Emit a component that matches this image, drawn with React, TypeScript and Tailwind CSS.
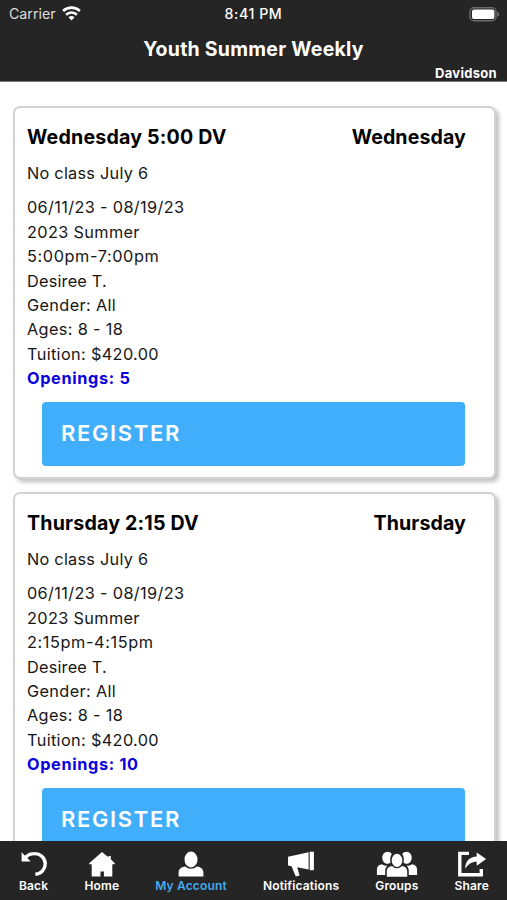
import type { ReactNode } from 'react'

const details = ['06/11/23 - 08/19/23', '2023 Summer']

const classes = [
  { title: 'Wednesday 5:00 DV', day: 'Wednesday', time: '5:00pm-7:00pm', openings: 5 },
  { title: 'Thursday 2:15 DV', day: 'Thursday', time: '2:15pm-4:15pm', openings: 10 },
]

const tabs: { label: string; active?: boolean; icon: ReactNode }[] = [
  {
    label: 'Back',
    icon: (
      <svg className="h-[26px] w-[26px]" viewBox="0 0 26 26" fill="none">
        <path d="M4.5 6.5C7 3.7 10 2.6 13.4 2.6A10.3 10.3 0 0 1 14.4 23.2" stroke="currentColor" strokeWidth="3.4" />
        <path d="M.6 1.3V10.4H9.6L6.8 7.6Z" fill="currentColor" />
      </svg>
    ),
  },
  {
    label: 'Home',
    icon: (
      <svg className="h-[26px] w-[26px]" viewBox="0 0 26 26" fill="currentColor">
        <path d="M13 .9L19.4 6.2V5H21.8V8.3L25.8 12.2V13.3H23.3V25.5H14.9V20.4H11.5V25.5H2.7V13.3H.2V12.2Z" />
      </svg>
    ),
  },
  {
    label: 'My Account',
    active: true,
    icon: (
      <svg className="h-[26px] w-[26px]" viewBox="0 0 26 26" fill="currentColor">
        <ellipse cx="13" cy="8.5" rx="6.5" ry="7.9" />
        <path d="M.6 25.6V21.5C.6 18.2 3.2 15.8 7.4 15.5C10.4 18.5 15.6 18.5 18.6 15.5C22.8 15.8 25.4 18.2 25.4 21.5V25.6Z" />
      </svg>
    ),
  },
  {
    label: 'Notifications',
    icon: (
      <svg className="h-[26px] w-[28px]" viewBox="0 0 28 26" fill="currentColor">
        <path d="M1 5.8L21.6 1.2V18.6L10.2 16.2L12.6 24.6L8.8 25.5L4.5 15.2L1 14.5Z" />
        <path d="M22.7.7H26.9V19.2H22.7Z" />
      </svg>
    ),
  },
  {
    label: 'Groups',
    icon: (
      <svg className="h-[26px] w-[42px]" viewBox="0 0 42 26" fill="currentColor">
        <path d="M15.8 3.1C13.8.1 9.7 0 7.5 2.8C5.3 5.7 6.2 10.6 9.2 12.3C11 13.3 13.2 12.8 14.5 11.4C13.8 8.5 14.2 5.4 15.8 3.1Z" />
        <path d="M26.2 3.1C28.2.1 32.3 0 34.5 2.8C36.7 5.7 35.8 10.6 32.8 12.3C31 13.3 28.8 12.8 27.5 11.4C28.2 8.5 27.8 5.4 26.2 3.1Z" />
        <ellipse cx="21" cy="9.4" rx="5.3" ry="6.6" />
        <path d="M.9 24V18.7C.9 15.4 3.1 13.6 6.1 13.3C8 14.7 9.6 15 11.4 14.6C9.9 16 9.2 17.8 9.2 20.1V24Z" />
        <path d="M41.1 24V18.7C41.1 15.4 38.9 13.6 35.9 13.3C34 14.7 32.4 15 30.6 14.6C32.1 16 32.8 17.8 32.8 20.1V24Z" />
        <path d="M10.8 25.7V20.5C10.8 17.2 13.1 15.1 16.2 15C18.6 17.9 23.4 17.9 25.8 15C28.9 15.1 31.2 17.2 31.2 20.5V25.7Z" />
      </svg>
    ),
  },
  {
    label: 'Share',
    icon: (
      <svg className="h-[26px] w-[30px]" viewBox="0 0 30 26" fill="none">
        <path d="M12 2.4H2.8V23.7H24.3V18" stroke="currentColor" strokeWidth="3.4" />
        <path d="M8.2 17.8C8.2 9.4 12.8 5.8 19.7 5.4V1.5L29.1 8.1L19.7 14.8V10.7C14.2 10.7 11.5 12.8 8.2 17.8Z" fill="currentColor" />
      </svg>
    ),
  },
]

function StatusBar() {
  return (
    <div className="grid h-7 grid-cols-3 items-center pl-[9px] pr-[7px]">
      <div className="flex items-center gap-1.5 text-[14.2px] text-[#dedede]">
        <span>Carrier</span>
        <svg className="h-[15px] w-[19px] text-white" viewBox="0 0 19 15" fill="none" stroke="currentColor" strokeWidth="2.6">
          <path d="M1.1 5C5.8.5 13.2.5 17.9 5" />
          <path d="M4.1 8.7C7.2 5.8 11.8 5.8 14.9 8.7" />
          <path d="M6.5 11.2C8.3 9.5 10.7 9.5 12.5 11.2L9.5 14.4Z" fill="currentColor" stroke="none" />
        </svg>
      </div>
      <div className="-ml-0.5 whitespace-nowrap text-center text-[14.2px] font-medium tracking-[0.55px]">8:41 PM</div>
      <svg className="h-[15px] w-[31px] justify-self-end" viewBox="0 0 31 15">
        <rect x="1" y="0.8" width="26" height="13" rx="4" fill="none" stroke="#6c6c6c" strokeWidth="1.4" />
        <rect x="3" y="2.4" width="22.4" height="9.7" rx="2.2" fill="#fff" />
        <path d="M28.4 4.8V9.8C30.7 9 30.7 5.6 28.4 4.8Z" fill="#777" />
      </svg>
    </div>
  )
}

function ClassCard({ item }: { item: (typeof classes)[number] }) {
  return (
    <article className="h-[373px] rounded-[7px] border-2 border-[#d2d2d2] bg-white pl-3 pr-7 pt-[16px] text-black shadow-[3px_3px_4px_rgba(0,0,0,0.25)]">
      <div className="flex justify-between text-[19.6px] font-bold leading-[26px]">
        <h2 className="tracking-[0.2px]">{item.title}</h2>
        <span className="tracking-[0.1px]">{item.day}</span>
      </div>
      <p className="mt-[11px] text-[16.3px] leading-[24.4px] tracking-[0.25px] text-[#161616]">No class July 6</p>
      <div className="mt-[10px] text-[16.3px] leading-[24.4px] tracking-[0.35px] text-[#161616]">
        {details.map((line) => (
          <p key={line}>{line}</p>
        ))}
        <p className="tracking-[0.6px]">{item.time}</p>
        <p className="tracking-[0.2px]">Desiree T.</p>
        <p>Gender: All</p>
        <p>Ages: 8 - 18</p>
        <p>Tuition: $420.00</p>
        <p className="font-bold tracking-[0.65px] text-[#0b00dd]">Openings: {item.openings}</p>
      </div>
      <button className="ml-[15px] mt-[11px] block h-[64px] w-[423px] rounded-[4px] bg-[#41aefc] pl-[19px] text-left text-[22px] font-semibold tracking-[1.65px] text-white">
        REGISTER
      </button>
    </article>
  )
}

export default function App() {
  return (
    <div className="flex h-[900px] w-[507px] flex-col overflow-hidden bg-white font-['Inter','Liberation_Sans',sans-serif]">
      <header className="h-[82px] shrink-0 border-b border-[#777] bg-[#252525] text-white">
        <StatusBar />
        <h1 className="mt-2 text-center text-[19.5px] font-bold leading-[27px] tracking-[0.25px]">Youth Summer Weekly</h1>
        <p className="mt-0.5 pr-2.5 text-right text-[13px] font-bold leading-4 tracking-[0.3px]">Davidson</p>
      </header>

      <main className="flex min-h-0 flex-1 flex-col gap-[13px] overflow-hidden pl-[13px] pr-[11px] pt-6">
        {classes.map((item) => (
          <div key={item.title} className="shrink-0">
            <ClassCard item={item} />
          </div>
        ))}
      </main>

      <nav className="flex h-[59px] shrink-0 justify-between bg-[#252525] pl-[19px] pr-[18px] pt-[10px] text-white">
        {tabs.map((tab) => (
          <a key={tab.label} className="flex flex-col items-center">
            {tab.icon}
            <span className={`mt-px text-[12px] font-semibold leading-4 tracking-[0.15px] ${tab.active ? 'text-[#46aaf0]' : 'text-white'}`}>
              {tab.label}
            </span>
          </a>
        ))}
      </nav>
    </div>
  )
}
